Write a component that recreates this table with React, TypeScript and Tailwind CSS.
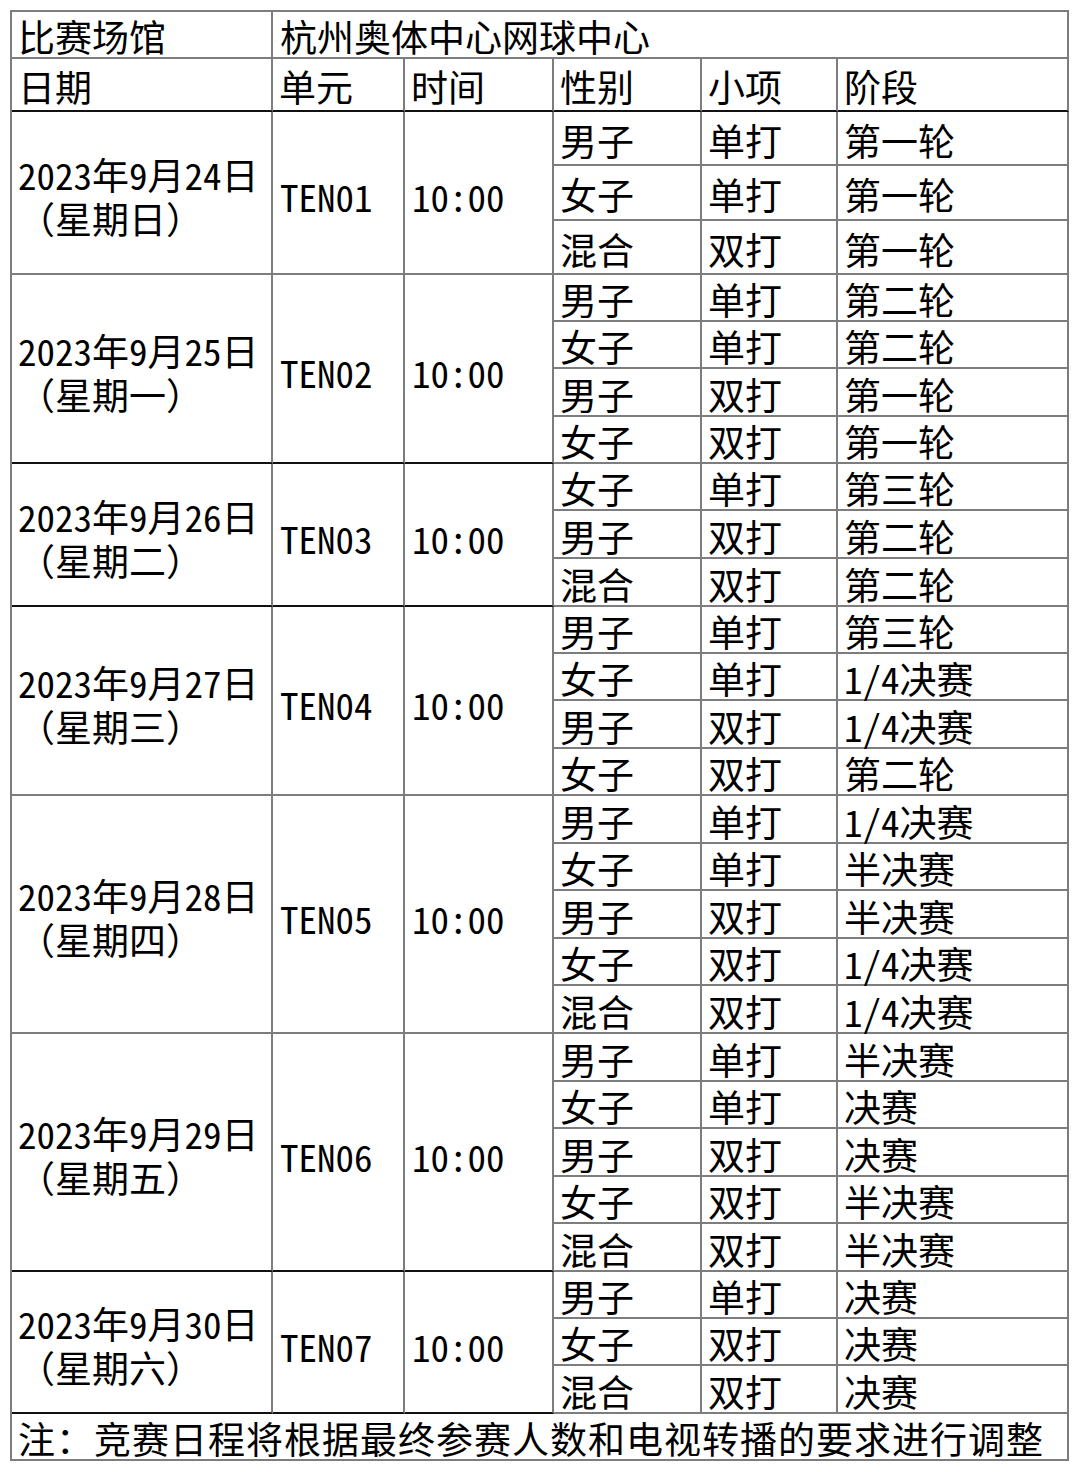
import React from "react";

type Group = {
  date: string;
  week: string;
  unit: string;
  rows: [string, string, string][];
  heights: number[];
  black: boolean;
};

const groups: Group[] = [
  {
    date: "2023年9月24日",
    week: "（星期日）",
    unit: "TEN01",
    rows: [
      ["男子", "单打", "第一轮"],
      ["女子", "单打", "第一轮"],
      ["混合", "双打", "第一轮"],
    ],
    heights: [54, 55, 54],
    black: false,
  },
  {
    date: "2023年9月25日",
    week: "（星期一）",
    unit: "TEN02",
    rows: [
      ["男子", "单打", "第二轮"],
      ["女子", "单打", "第二轮"],
      ["男子", "双打", "第一轮"],
      ["女子", "双打", "第一轮"],
    ],
    heights: [47, 47, 48, 47],
    black: true,
  },
  {
    date: "2023年9月26日",
    week: "（星期二）",
    unit: "TEN03",
    rows: [
      ["女子", "单打", "第三轮"],
      ["男子", "双打", "第二轮"],
      ["混合", "双打", "第二轮"],
    ],
    heights: [47, 48, 48],
    black: true,
  },
  {
    date: "2023年9月27日",
    week: "（星期三）",
    unit: "TEN04",
    rows: [
      ["男子", "单打", "第三轮"],
      ["女子", "单打", "1/4决赛"],
      ["男子", "双打", "1/4决赛"],
      ["女子", "双打", "第二轮"],
    ],
    heights: [47, 47, 48, 47],
    black: false,
  },
  {
    date: "2023年9月28日",
    week: "（星期四）",
    unit: "TEN05",
    rows: [
      ["男子", "单打", "1/4决赛"],
      ["女子", "单打", "半决赛"],
      ["男子", "双打", "半决赛"],
      ["女子", "双打", "1/4决赛"],
      ["混合", "双打", "1/4决赛"],
    ],
    heights: [48, 47, 48, 47, 48],
    black: false,
  },
  {
    date: "2023年9月29日",
    week: "（星期五）",
    unit: "TEN06",
    rows: [
      ["男子", "单打", "半决赛"],
      ["女子", "单打", "决赛"],
      ["男子", "双打", "决赛"],
      ["女子", "双打", "半决赛"],
      ["混合", "双打", "半决赛"],
    ],
    heights: [48, 47, 48, 47, 48],
    black: true,
  },
  {
    date: "2023年9月30日",
    week: "（星期六）",
    unit: "TEN07",
    rows: [
      ["男子", "单打", "决赛"],
      ["女子", "双打", "决赛"],
      ["混合", "双打", "决赛"],
    ],
    heights: [47, 47, 48],
    black: true,
  },
];

const font =
  "[font-family:'Noto_Sans_CJK_SC','Noto_Sans_CJK_JP',sans-serif] font-normal text-[37px] leading-[1.2] text-black";
const hw = "[font-feature-settings:'hwid']";

export default function App() {
  return (
    <div className={`bg-white w-[1080px] h-[1472px] pt-[10px] pl-[10px] ${font}`}>
      <div className="w-[1059px] border-t-2 border-l-2 border-[#7d7d7d] flex flex-col">
        {/* venue row */}
        <div className="flex h-[47px]">
          <div className="w-[261px] border-r-2 border-b-2 border-[#7d7d7d] flex items-center pl-[6px] pt-[4px]">
            比赛场馆
          </div>
          <div className="flex-1 border-r-2 border-b-2 border-[#7d7d7d] flex items-center pl-[7px] pt-[4px]">
            杭州奥体中心网球中心
          </div>
        </div>
        {/* header row */}
        <div className="flex h-[53px]">
          {[
            ["日期", "w-[261px]"],
            ["单元", "w-[132px]"],
            ["时间", "w-[149px]"],
            ["性别", "w-[148px]"],
            ["小项", "w-[136px]"],
            ["阶段", "w-[231px]"],
          ].map(([t, w]) => (
            <div
              key={t}
              className={`${w} border-r-2 border-[#7d7d7d] border-b-2 border-b-[#111] flex items-center pl-[6px] pt-[4px]`}
            >
              {t}
            </div>
          ))}
        </div>
        {groups.map((g) => {
          const total = g.heights.reduce((a, b) => a + b, 0);
          const bottom = g.black ? "border-b-[#111]" : "border-b-[#7d7d7d]";
          return (
            <div key={g.unit} className="flex" style={{ height: total }}>
              <div
                className={`w-[261px] border-r-2 border-b-2 border-r-[#7d7d7d] ${bottom} flex flex-col justify-center pl-[6px] pt-[6px] leading-[44px]`}
              >
                <div className={hw}>{g.date}</div>
                <div>{g.week}</div>
              </div>
              <div
                className={`w-[132px] border-r-2 border-b-2 border-r-[#7d7d7d] ${bottom} flex items-center pl-[7px] pt-[8px] ${hw}`}
              >
                {g.unit}
              </div>
              <div
                className={`w-[149px] border-r-2 border-b-2 border-r-[#7d7d7d] ${bottom} flex items-center pl-[7px] pt-[8px] ${hw}`}
              >
                10:00
              </div>
              <div className="flex flex-col">
                {g.rows.map((r, i) => (
                  <div key={i} className="flex" style={{ height: g.heights[i] }}>
                    <div className="w-[148px] border-r-2 border-b-2 border-[#7d7d7d] flex items-center pl-[6px] pt-[4px]">
                      {r[0]}
                    </div>
                    <div className="w-[136px] border-r-2 border-b-2 border-[#7d7d7d] flex items-center pl-[6px] pt-[4px]">
                      {r[1]}
                    </div>
                    <div
                      className={`w-[231px] border-r-2 border-b-2 border-[#7d7d7d] flex items-center pl-[6px] pt-[4px] ${hw}`}
                    >
                      {r[2]}
                    </div>
                  </div>
                ))}
              </div>
            </div>
          );
        })}
        {/* footer */}
        <div className="h-[47px] border-r-2 border-b-2 border-[#7d7d7d] flex items-center pl-[6px] pt-[4px] tracking-[1px]">
          注：竞赛日程将根据最终参赛人数和电视转播的要求进行调整
        </div>
      </div>
    </div>
  );
}
